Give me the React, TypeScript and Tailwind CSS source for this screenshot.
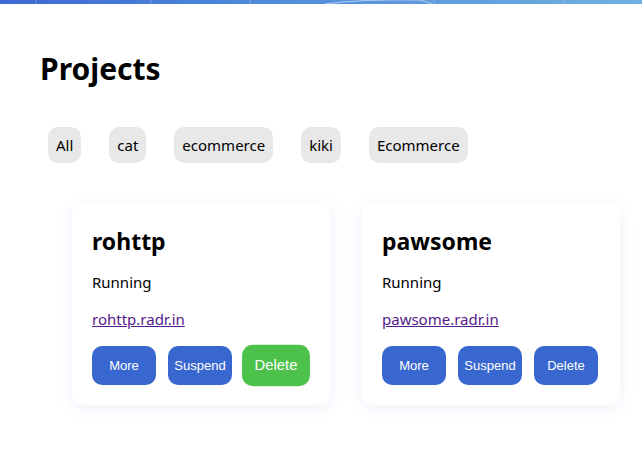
import React from "react";

const tags = ["All", "cat", "ecommerce", "kiki", "Ecommerce"];

function Card({ name, hoverDelete }: { name: string; hoverDelete?: boolean }) {
  return (
    <div className="w-[258px] shrink-0 rounded-[10px] bg-white px-5 pt-[22px] pb-5 shadow-[0_2px_16px_rgba(70,110,220,0.10)]">
      <h3 className="text-[23px] font-bold leading-[30px] text-black">{name}</h3>
      <p className="mt-[16px] text-[15px] leading-[20px] text-black">Running</p>
      <a href="#" className="mt-[17px] block text-[15px] leading-[20px] text-[#551a8b] underline">
        {name}.radr.in
      </a>
      <div className="mt-[17px] flex gap-3" style={{ fontFamily: '"Liberation Sans", Arial, sans-serif' }}>
        <button className="h-[39px] min-w-[64px] rounded-[10px] bg-[#3867cf] px-[6px] text-[13px] text-white">More</button>
        <button className="h-[39px] min-w-[64px] rounded-[10px] bg-[#3867cf] px-[6px] text-[13px] text-white">Suspend</button>
        <button
          className={
            hoverDelete
              ? "h-[39px] min-w-[64px] scale-[1.06] rounded-[10px] bg-[#4cc24a] px-[6px] text-[14px] text-white"
              : "h-[39px] min-w-[64px] rounded-[10px] bg-[#3867cf] px-[6px] text-[13px] text-white"
          }
        >
          Delete
        </button>
      </div>
    </div>
  );
}

export default function App() {
  return (
    <div className="min-h-[462px] w-[642px] overflow-hidden bg-white" style={{ fontFamily: '"Noto Sans", "Open Sans", sans-serif' }}>
      <div className="relative h-[4px] w-full bg-gradient-to-r from-[#3a69d3] via-[#5690dc] to-[#72b0e0]">
        <svg className="absolute inset-0 h-[4px] w-full" viewBox="0 0 642 4" preserveAspectRatio="none">
          <line x1="36" y1="0" x2="36" y2="4" stroke="rgba(255,255,255,0.25)" />
          <line x1="151" y1="0" x2="151" y2="4" stroke="rgba(255,255,255,0.25)" />
          <line x1="250" y1="0" x2="250" y2="4" stroke="rgba(255,255,255,0.25)" />
          <line x1="434" y1="0" x2="434" y2="4" stroke="rgba(255,255,255,0.25)" />
          <line x1="564" y1="0" x2="564" y2="4" stroke="rgba(255,255,255,0.25)" />
          <path d="M325 4 Q360 -1 420 0 Q428 2 432 4" stroke="rgba(255,255,255,0.7)" fill="none" strokeWidth="0.8" />
        </svg>
      </div>
      <div className="px-10 pt-[43px]">
        <h1 className="text-[30px] font-bold leading-[44px] text-black">Projects</h1>
        <div className="ml-2 mt-[36px] flex gap-7">
          {tags.map((t) => (
            <span key={t} className="flex h-9 items-center rounded-[10px] bg-[#e8e8e8] px-2 text-[15px] text-black">
              {t}
            </span>
          ))}
        </div>
        <div className="ml-8 mt-[41px] flex gap-8">
          <Card name="rohttp" hoverDelete />
          <Card name="pawsome" />
        </div>
      </div>
    </div>
  );
}
